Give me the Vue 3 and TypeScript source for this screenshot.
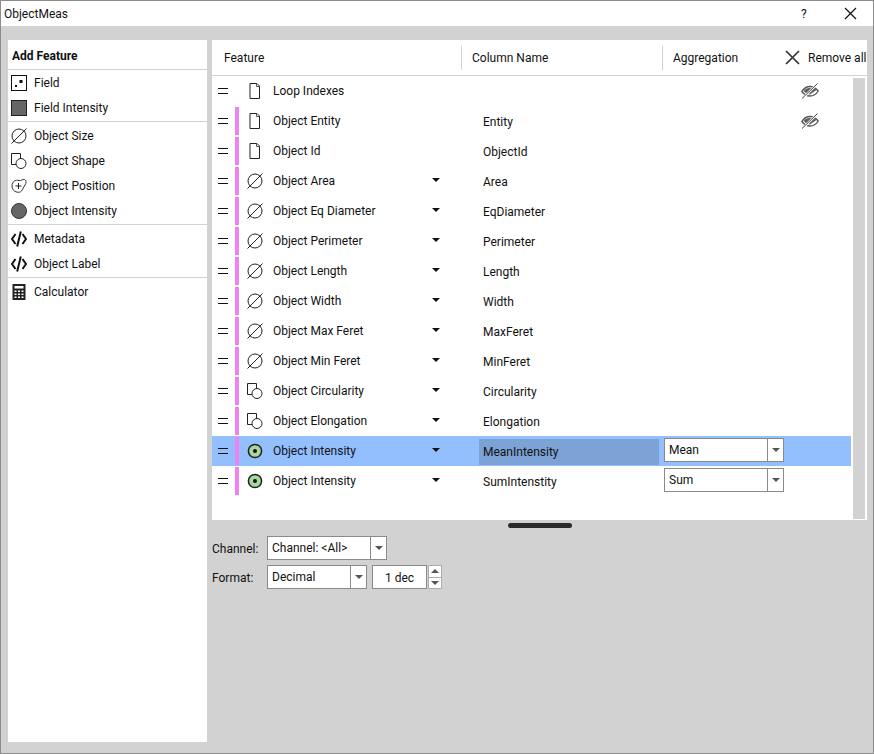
<script setup lang="ts">
type Row = { name: string; column: string; icon: string; bar?: boolean; caret?: boolean; hidden?: boolean; selected?: boolean; agg?: string };

const groups: { label: string; icon: string }[][] = [
  [{ label: 'Field', icon: 'field' }, { label: 'Field Intensity', icon: 'square' }],
  [
    { label: 'Object Size', icon: 'size' },
    { label: 'Object Shape', icon: 'shape' },
    { label: 'Object Position', icon: 'position' },
    { label: 'Object Intensity', icon: 'disc' }
  ],
  [{ label: 'Metadata', icon: 'code' }, { label: 'Object Label', icon: 'code' }],
  [{ label: 'Calculator', icon: 'calc' }]
];

const m = (name: string, column: string, icon: string): Row => ({ name, column, icon, bar: true, caret: true });

const rows: Row[] = [
  { name: 'Loop Indexes', column: '', icon: 'doc', hidden: true },
  { name: 'Object Entity', column: 'Entity', icon: 'doc', bar: true, hidden: true },
  { name: 'Object Id', column: 'ObjectId', icon: 'doc', bar: true },
  m('Object Area', 'Area', 'size'),
  m('Object Eq Diameter', 'EqDiameter', 'size'),
  m('Object Perimeter', 'Perimeter', 'size'),
  m('Object Length', 'Length', 'size'),
  m('Object Width', 'Width', 'size'),
  m('Object Max Feret', 'MaxFeret', 'size'),
  m('Object Min Feret', 'MinFeret', 'size'),
  m('Object Circularity', 'Circularity', 'shape'),
  m('Object Elongation', 'Elongation', 'shape'),
  { ...m('Object Intensity', 'MeanIntensity', 'target'), selected: true, agg: 'Mean' },
  { ...m('Object Intensity', 'SumIntenstity', 'target'), agg: 'Sum' }
];
</script>

<template>
  <div class="window">
    <svg class="defs" width="0" height="0" aria-hidden="true">
      <symbol id="field" viewBox="0 0 16 16">
        <rect x="0.5" y="0.5" width="15" height="15" fill="#fff" stroke="#111" />
        <rect x="8.5" y="5" width="3" height="3" fill="#111" />
        <rect x="4" y="10" width="2" height="2" fill="#111" />
      </symbol>
      <symbol id="square" viewBox="0 0 16 16">
        <rect x="0.5" y="0.5" width="15" height="15" fill="#666" stroke="#222" />
      </symbol>
      <symbol id="size" viewBox="0 0 16 16">
        <circle cx="8" cy="8" r="7" fill="#fff" stroke="#222" />
        <path d="M0.5 15.5 15.5 0.5" stroke="#222" fill="none" />
      </symbol>
      <symbol id="shape" viewBox="0 0 16 16">
        <path d="M9.5 6.5V0.5H0.5V11.5H5.5" fill="none" stroke="#222" />
        <circle cx="10" cy="10.5" r="5" fill="#fff" stroke="#222" />
      </symbol>
      <symbol id="position" viewBox="0 0 16 16">
        <path d="M1 8C1 3.5 4.5 1.5 8 2.5C10 3.2 11.5 1 13.5 1.5C15.5 2.2 15.5 5 14 7C12.5 9 12 11 10.5 13C8.5 15.5 1 14.5 1 8Z" fill="#fff" stroke="#333" />
        <path d="M7.5 5V11M4.5 8H10.5" stroke="#222" fill="none" />
      </symbol>
      <symbol id="disc" viewBox="0 0 16 16">
        <circle cx="8" cy="8" r="7.5" fill="#666" stroke="#333" />
      </symbol>
      <symbol id="target" viewBox="0 0 16 16">
        <circle cx="8" cy="8" r="6.6" fill="#a8d8a0" stroke="#222" stroke-width="1.5" />
        <circle cx="8" cy="8" r="2" fill="#111" />
      </symbol>
      <symbol id="code" viewBox="0 0 16 16">
        <path d="M4.5 3 1 8l3.5 5M11.5 3 15 8l-3.5 5M9.8 0.5 6.2 15.5" fill="none" stroke="#111" stroke-width="2" />
      </symbol>
      <symbol id="calc" viewBox="0 0 16 16">
        <path d="M1.5 0H14.5V16H1.5Z" fill="#222" />
        <rect x="3.5" y="2" width="9" height="2.5" fill="#fff" />
        <path d="M3.5 6.5h2v1.5h-2zM7 6.5h2v1.5H7zM10.5 6.5h2v1.5h-2zM3.5 9.5h2V11h-2zM7 9.5h2V11H7zM10.5 9.5h2V11h-2zM3.5 12.5h2V14h-2zM7 12.5h2V14H7zM10.5 12.5h2V14h-2z" fill="#fff" />
      </symbol>
      <symbol id="doc" viewBox="0 0 16 16">
        <path d="M3 0.5H10L12.5 3V15.5H3Z" fill="#fff" stroke="#222" />
        <path d="M9.5 0.5V3.5H12.5" fill="none" stroke="#555" />
      </symbol>
      <symbol id="eye" viewBox="0 0 18 16">
        <path d="M0.8 8.5C3 5 6 3.5 9 3.5C12 3.5 15 5 17.2 8C15 11.5 12 13 9 13C6 13 3 11.5 0.8 8.5Z" fill="none" stroke="#555" stroke-width="1.3" />
        <path d="M2.5 8C5 4.5 13 3.5 15.5 7L9 11.5C7 11.5 5 10.5 2.5 8Z" fill="#5f5f5f" />
        <path d="M1.5 15.5 16.5 0.5" stroke="#fff" stroke-width="2.4" fill="none" />
        <path d="M1 15.5 16.5 0.5" stroke="#444" stroke-width="1" fill="none" />
      </symbol>
    </svg>

    <header class="titlebar">
      <span class="title">ObjectMeas</span>
      <span class="help">?</span>
      <svg class="close" width="13" height="13" viewBox="0 0 13 13"><path d="M1 1 12 12M12 1 1 12" stroke="#111" stroke-width="1.2" fill="none" /></svg>
    </header>

    <main class="body">
      <aside class="palette">
        <div class="palette-title">Add Feature</div>
        <section v-for="(group, g) in groups" :key="g" class="group">
          <div v-for="item in group" :key="item.label" class="palette-item">
            <svg class="palette-icon" viewBox="0 0 16 16"><use :href="'#' + item.icon" /></svg>
            <span>{{ item.label }}</span>
          </div>
        </section>
      </aside>

      <div class="content">
        <section class="table">
          <div class="table-head">
            <div class="th th-feature">Feature</div>
            <div class="th th-column">Column Name</div>
            <div class="th th-agg">Aggregation</div>
            <div class="remove">
              <svg width="15" height="15" viewBox="0 0 15 15"><path d="M1 1 14 14M14 1 1 14" stroke="#333" stroke-width="1.7" fill="none" /></svg>
              <span>Remove all</span>
            </div>
          </div>
          <div class="table-body">
            <div class="rows">
              <div v-for="(row, i) in rows" :key="i" class="row" :class="{ selected: row.selected }">
                <span class="grip"></span>
                <span class="bar" :class="{ on: row.bar }"></span>
                <svg class="row-icon" viewBox="0 0 16 16"><use :href="'#' + row.icon" /></svg>
                <span class="name">{{ row.name }}</span>
                <span class="caret-cell"><i v-if="row.caret" class="caret"></i></span>
                <span class="column-name">{{ row.column }}</span>
                <span class="agg-cell">
                  <span v-if="row.agg" class="combo agg-combo">
                    <span class="combo-text">{{ row.agg }}</span>
                    <span class="combo-btn"><i class="combo-arrow"></i></span>
                  </span>
                </span>
                <svg v-if="row.hidden" class="eye" viewBox="0 0 18 16"><use href="#eye" /></svg>
              </div>
            </div>
            <div class="scrollbar"></div>
          </div>
        </section>

        <div class="splitter"><span class="handle"></span></div>

        <div class="controls">
          <div class="control-row">
            <label>Channel:</label>
            <span class="combo channel-combo">
              <span class="combo-text">Channel: &lt;All&gt;</span>
              <span class="combo-btn"><i class="combo-arrow"></i></span>
            </span>
          </div>
          <div class="control-row">
            <label>Format:</label>
            <span class="combo format-combo">
              <span class="combo-text">Decimal</span>
              <span class="combo-btn"><i class="combo-arrow"></i></span>
            </span>
            <span class="spin-input">1 dec</span>
            <span class="spin-btns">
              <span class="spin-btn"><i class="up"></i></span>
              <span class="spin-btn"><i class="down"></i></span>
            </span>
          </div>
        </div>
      </div>
    </main>
  </div>
</template>

<style scoped>
.window {
  width: 874px;
  height: 754px;
  box-sizing: border-box;
  border: 1px solid #8c8c8c;
  display: flex;
  flex-direction: column;
  background: #d2d2d2;
  font-family: Roboto, "Liberation Sans", sans-serif;
  font-size: 12px;
  color: #111;
  overflow: hidden;
}
.defs { position: absolute; }
.titlebar {
  height: 25px;
  background: #fff;
  display: flex;
  align-items: center;
  padding: 0 16px 0 3px;
  flex: none;
}
.title { flex: 1; }
.help { width: 43px; }
.body {
  flex: 1;
  display: flex;
  gap: 5px;
  padding: 14px 6px 11px 7px;
  min-height: 0;
}
.palette {
  width: 199px;
  background: #fff;
  flex: none;
}
.palette-title {
  height: 29px;
  line-height: 32px;
  padding-left: 4px;
  font-weight: 700;
  border-bottom: 1px solid #d2d2d2;
}
.group { padding: 1px 0; border-bottom: 1px solid #d2d2d2; }
.group:first-of-type { padding-top: 0; }
.group:last-child { border-bottom: none; }
.palette-item {
  height: 25px;
  display: flex;
  align-items: center;
  padding-left: 3px;
  gap: 7px;
}
.palette-icon { width: 16px; height: 16px; flex: none; }
.content { flex: 1; display: flex; flex-direction: column; min-width: 0; }
.table { width: 655px; height: 480px; background: #fff; display: flex; flex-direction: column; flex: none; }
.table-head {
  height: 36px;
  box-sizing: border-box;
  border-bottom: 1px solid #d2d2d2;
  display: flex;
  align-items: center;
  flex: none;
}
.th { height: 24px; line-height: 24px; box-sizing: border-box; }
.th-feature { width: 250px; padding-left: 12px; border-right: 1px solid #d2d2d2; }
.th-column { width: 201px; padding-left: 10px; border-right: 1px solid #d2d2d2; }
.th-agg { width: 122px; padding-left: 10px; }
.remove { display: flex; align-items: center; gap: 8px; }
.table-body { flex: 1; display: flex; min-height: 0; }
.rows { width: 639px; flex: none; }
.row {
  height: 30px;
  display: grid;
  grid-template-columns: 23px 4px 8px 16px 10px 158px 10px 38px 180px 5px 120px 17px 18px;
  grid-template-areas: "grip bar . icon . name caret . col . agg . eye";
  align-items: center;
}
.row.selected { background: #93bfff; }
.grip {
  grid-area: grip;
  justify-self: start;
  margin-left: 6px;
  width: 10px;
  height: 4px;
  border-top: 1px solid #111;
  border-bottom: 1px solid #111;
}
.bar { grid-area: bar; height: 28px; }
.bar.on { background: #ee82ee; }
.row-icon { grid-area: icon; width: 16px; height: 16px; }
.name { grid-area: name; white-space: nowrap; }
.caret-cell { grid-area: caret; display: flex; justify-content: center; margin-top: -2px; }
.caret {
  width: 0;
  height: 0;
  border-left: 4px solid transparent;
  border-right: 4px solid transparent;
  border-top: 4px solid #111;
}
.column-name { grid-area: col; padding-left: 4px; line-height: 26px; height: 26px; margin-top: 1px; }
.selected .column-name { background: #7ca2d6; }
.agg-cell { grid-area: agg; display: flex; }
.eye { grid-area: eye; width: 18px; height: 16px; }
.combo {
  height: 24px;
  box-sizing: border-box;
  border: 1px solid #8a8a8a;
  background: #fff;
  display: flex;
  align-items: center;
  flex: none;
}
.agg-combo { width: 120px; margin-top: -2px; }
.channel-combo { width: 120px; }
.format-combo { width: 100px; }
.combo-text { flex: 1; padding-left: 4px; white-space: nowrap; }
.combo-btn {
  width: 15px;
  height: 100%;
  border-left: 1px solid #8a8a8a;
  display: flex;
  align-items: center;
  justify-content: center;
  flex: none;
}
.combo-arrow {
  width: 0;
  height: 0;
  border-left: 4px solid transparent;
  border-right: 4px solid transparent;
  border-top: 4px solid #555;
}
.scrollbar { width: 12px; height: 441px; margin: 2px 0 0 2px; background: #d2d2d2; }
.splitter { height: 16px; display: flex; justify-content: center; padding-top: 3px; box-sizing: border-box; flex: none; width: 655px; }
.handle { width: 64px; height: 5px; border-radius: 3px; background: #2b2b2b; }
.controls { display: flex; flex-direction: column; gap: 5px; }
.control-row { display: flex; align-items: center; height: 24px; }
.control-row label { width: 55px; flex: none; margin-top: 1px; }
.spin-input {
  width: 55px;
  height: 24px;
  box-sizing: border-box;
  border: 1px solid #8a8a8a;
  background: #fff;
  margin-left: 5px;
  text-align: center;
  line-height: 24px;
}
.spin-btns { display: flex; flex-direction: column; width: 14px; height: 24px; box-sizing: border-box; border: 1px solid #adadad; margin-left: 1px; background: #fff; }
.spin-btn { flex: 1; display: flex; align-items: center; justify-content: center; }
.spin-btn + .spin-btn { border-top: 1px solid #adadad; }
.up, .down { width: 0; height: 0; border-left: 4px solid transparent; border-right: 4px solid transparent; }
.up { border-bottom: 4px solid #555; }
.down { border-top: 4px solid #555; }
</style>
